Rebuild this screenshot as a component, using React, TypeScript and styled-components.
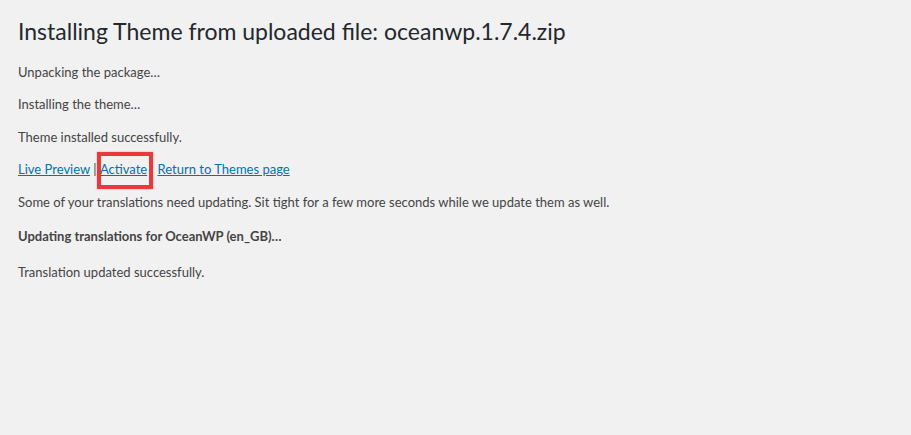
import React from "react";
import styled, { createGlobalStyle } from "styled-components";

const Global = createGlobalStyle`
  html, body { margin: 0; padding: 0; background: #f1f1f1; }
  body { font-family: "Segoe UI", Lato, sans-serif; }
`;

const Wrap = styled.div`
  padding: 17px 18px 20px 18px;
  min-height: 435px;
  box-sizing: border-box;
  background: #f1f1f1;
  color: #444;
  font-size: 13px;
  line-height: 19.5px;
`;

const Title = styled.h1`
  font-size: 23px;
  font-weight: 400;
  line-height: 29.9px;
  color: #23282d;
  margin: 0 0 16px 0;
  padding: 0;
`;

const P = styled.p<{ $bold?: boolean }>`
  margin: ${(p) => (p.$bold ? "14.5px 0 16.5px" : "13px 0")};
  font-weight: ${(p) => (p.$bold ? 700 : 400)};
`;

const Link = styled.a`
  color: #0073aa;
  text-decoration: underline;
`;

const Highlight = styled.span`
  position: relative;
  display: inline-block;
  margin-right: 7px;
`;

const RedBox = styled.span`
  position: absolute;
  left: -3px;
  right: -6px;
  top: -8px;
  bottom: -9px;
  border: 4px solid #e8393b;
  box-shadow: 0 0 2px rgba(0, 0, 0, 0.25);
  pointer-events: none;
`;

export default function App() {
  return (
    <>
      <Global />
      <Wrap>
        <Title>Installing Theme from uploaded file: oceanwp.1.7.4.zip</Title>
        <P>Unpacking the package…</P>
        <P>Installing the theme…</P>
        <P>Theme installed successfully.</P>
        <P>
          <Link href="#">Live Preview</Link> |{" "}
          <Highlight>
            <Link href="#">Activate</Link>
            <RedBox />
          </Highlight>{" "}
          <Link href="#">Return to Themes page</Link>
        </P>
        <P>Some of your translations need updating. Sit tight for a few more seconds while we update them as well.</P>
        <P $bold>Updating translations for OceanWP (en_GB)…</P>
        <P>Translation updated successfully.</P>
      </Wrap>
    </>
  );
}
